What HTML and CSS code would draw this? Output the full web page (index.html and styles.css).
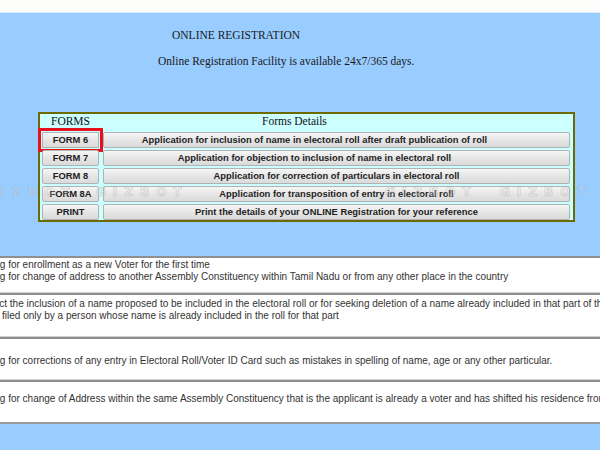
FILE: index.html
```html
<!DOCTYPE html>
<html lang="en">
<head>
    <meta charset="UTF-8">
    <title>Online Registration</title>
    <link rel="stylesheet" href="styles.css">
</head>
<body>
<div class="topbar"></div>
<div id="content">
    <p class="title">ONLINE REGISTRATION</p>
    <p class="subtitle">Online Registration Facility is available 24x7/365 days.</p>

    <div class="forms">
        <div class="head-name">FORMS</div>
        <div class="head-detail">Forms Details</div>

        <button class="btn form-btn current">FORM 6</button>
        <button class="btn detail-btn shift">Application for inclusion of name in electoral roll after draft publication of roll</button>

        <button class="btn form-btn">FORM 7</button>
        <button class="btn detail-btn shift">Application for objection to inclusion of name in electoral roll</button>

        <button class="btn form-btn">FORM 8</button>
        <button class="btn detail-btn">Application for correction of particulars in electoral roll</button>

        <button class="btn form-btn">FORM 8A</button>
        <button class="btn detail-btn">Application for transposition of entry in electoral roll</button>

        <button class="btn form-btn">PRINT</button>
        <button class="btn detail-btn">Print the details of your ONLINE Registration for your reference</button>
    </div>

    <div class="notes">
        <div class="note note-1">
            <p>Applying for enrollment as a new Voter for the first time</p>
            <p>Applying for change of address to another Assembly Constituency within Tamil Nadu or from any other place in the country</p>
        </div>
        <div class="note note-2">
            <p>To object the inclusion of a name proposed to be included in the electoral roll or for seeking deletion of a name already included in that part of the roll</p>
            <p>Can be filed only by a person whose name is already included in the roll for that part</p>
        </div>
        <div class="note note-3">
            <p>Applying for corrections of any entry in Electoral Roll/Voter ID Card such as mistakes in spelling of name, age or any other particular.</p>
        </div>
        <div class="note note-4">
            <p>Applying for change of Address within the same Assembly Constituency that is the applicant is already a voter and has shifted his residence from one part to another</p>
        </div>
    </div>
</div>

<div class="watermark">
    <span class="mark-1">GIZBOT</span>
    <span class="mark-2">GIZBOT</span>
    <span class="mark-3">GIZBOT</span>
    <span class="mark-4">GIZBOT</span>
</div>
</body>
</html>
```

FILE: styles.css
```css
html,body,p,div{
    margin: 0;
    padding: 0;
}
body{
    background-color: #99ccff;
    overflow: hidden;
    position: relative;
    height: 450px;
}
.topbar{
    height: 13px;
    background-color: #fdfefc;
    border-bottom: 1px solid #d6ecff;
    box-sizing: border-box;
}
#content{
    overflow: hidden;
}
.title,
.subtitle{
    font-family: "Liberation Serif", "Times New Roman", serif;
    font-size: 11.5px;
    line-height: 14px;
    color: #1a1a1a;
}
.title{
    margin-top: 15px;
    padding-left: 172px;
}
.subtitle{
    margin-top: 12px;
    padding-left: 158px;
}

/* forms table */
.forms{
    width: 537px;
    box-sizing: border-box;
    margin: 44px 0 0 38px;
    border: 2px solid #6c6a00;
    background-color: #ccffff;
    display: grid;
    grid-template-columns: 57px 1fr;
    grid-auto-rows: 16px;
    column-gap: 4px;
    row-gap: 2px;
    padding: 0 3px 0 2px;
}
.head-name,
.head-detail{
    font-family: "Liberation Serif", "Times New Roman", serif;
    font-size: 11.5px;
    line-height: 15px;
    height: 15px;
    color: #111;
}
.head-name{
    text-align: center;
}
.head-detail{
    padding-left: 159px;
}
.btn{
    margin: 0;
    padding: 0;
    height: 16px;
    border: 1px solid #aeb4b4;
    border-radius: 2px;
    background: linear-gradient(#f6f6f6, #e6e6e6 50%, #dadada);
    font-family: "Liberation Sans", Arial, sans-serif;
    font-weight: bold;
    font-size: 9.4px;
    line-height: 14px;
    color: #1e1e1e;
    text-align: center;
    white-space: nowrap;
}
.shift{
    padding-right: 44px;
}
.current{
    border-radius: 0;
    outline: 3px solid #e8101a;
    outline-offset: 1px;
}

/* notes */
.notes{
    margin: 34px 0 0 -33px;
    border-bottom: 2px solid #9a9a9a;
}
.note{
    background-color: #ffffff;
    border-top: 2px solid #8f8f8f;
    border-bottom: 1px solid #cfcfcf;
}
.note p{
    font-family: "Liberation Sans", Arial, sans-serif;
    font-size: 10px;
    line-height: 12px;
    color: #333;
    white-space: nowrap;
}
.note-1{
    padding: 1px 0 9px;
}
.note-2{
    padding: 3px 0 14px;
}
.note-3{
    padding: 16px 0 12px;
}
.note-4{
    padding: 11px 0 17px;
    border-bottom: none;
}

/* watermark over the page */
.watermark{
    position: absolute;
    left: 0;
    top: 185px;
    width: 600px;
    height: 14px;
    pointer-events: none;
}
.watermark span{
    position: absolute;
    top: 0;
    font-family: "DejaVu Sans", sans-serif;
    font-weight: bold;
    font-size: 12px;
    letter-spacing: 7px;
    color: rgba(255,255,255,0.2);
    -webkit-text-stroke: 0.7px rgba(160,160,160,0.5);
}
.mark-1{ left: -16px; }
.mark-2{ left: 96px; }
.mark-3{ left: 385px; }
.mark-4{ left: 500px; }
```
